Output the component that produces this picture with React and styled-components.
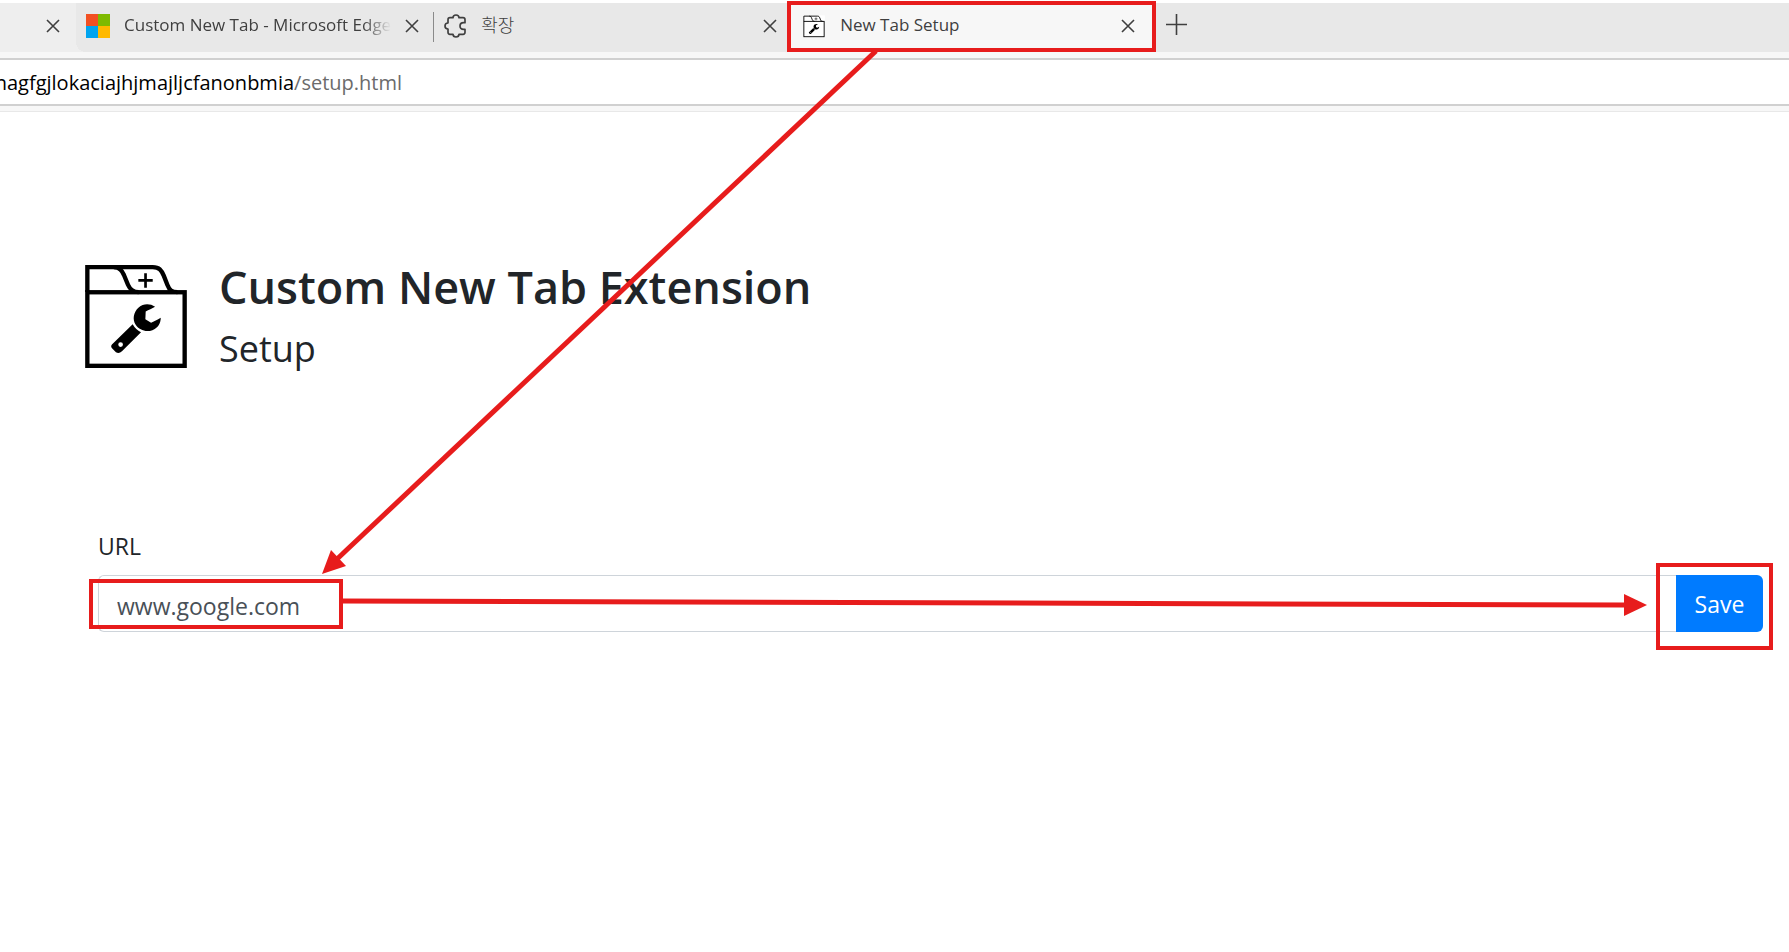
import React from "react";
import styled, { createGlobalStyle, css } from "styled-components";

const RED = "#e71c1c";

const GlobalStyle = createGlobalStyle`
  * {
    box-sizing: border-box;
  }
  body {
    margin: 0;
    background: #ffffff;
    color: #212529;
    font-family: "Open Sans", "Noto Sans", "Noto Sans CJK KR", sans-serif;
  }
`;

const Browser = styled.div`
  position: relative;
  min-height: 100vh;
  padding-top: 3px;
`;

const TabStrip = styled.div`
  display: flex;
  height: 49px;
  background: #e8e8e8;
`;

const highlight = css`
  &::before {
    content: "";
    position: absolute;
    inset: ${(props) => props.$inset};
    border: 4px solid ${RED};
    background: ${(props) => props.$fill || "transparent"};
    pointer-events: none;
  }
`;

const Tab = styled.div`
  position: relative;
  display: flex;
  align-items: center;
  flex: 0 0 358px;
  gap: 14px;
  padding: 0 15px 4px 10px;
  color: #3f3f3f;
  ${(props) => props.$active && highlight}

  > * {
    position: relative;
  }
`;

/* 왼쪽에서 잘린 탭 */
const CutTab = styled(Tab)`
  flex-basis: 76px;
  justify-content: flex-end;
  padding-right: 16px;
  background: #eeeeee;

  &::after {
    content: "";
    position: absolute;
    left: 100%;
    bottom: 0;
    width: 10px;
    height: 10px;
    background: radial-gradient(circle at 100% 0, transparent 10px, #eeeeee 10px);
  }
`;

const TabTitle = styled.span`
  flex: 1;
  padding-bottom: 2px;
  overflow: hidden;
  white-space: nowrap;
  font-size: 17px;
  line-height: 24px;
  ${(props) =>
    props.$fade &&
    "mask-image: linear-gradient(to right, #000 calc(100% - 28px), transparent);"}

  &:lang(ko) {
    font-size: 18px;
    font-weight: 300;
  }
`;

const IconButton = styled.button`
  display: flex;
  padding: 0;
  border: 0;
  background: none;
  color: #3f3f3f;
`;

const NewTabButton = styled(IconButton)`
  align-self: center;
  padding: 0 0 6px 16px;
`;

const Divider = styled.div`
  align-self: flex-start;
  flex: 0 0 1px;
  height: 30px;
  margin: 9px 0 0 -1px;
  background: #8a8a8a;
`;

const WindowsLogo = styled.div`
  display: grid;
  grid-template-columns: 12px 12px;
  grid-auto-rows: 12px;
`;

const Pane = styled.i`
  background: ${(props) => props.$color};
`;

const AddressRow = styled.div`
  padding: 6px 0 5px;
  border-bottom: 1px solid #e8e8e8;
  background: #f7f7f7;
`;

const AddressBar = styled.div`
  height: 48px;
  border-top: 2px solid #d0d0d0;
  border-bottom: 2px solid #d0d0d0;
  background: #ffffff;
`;

const Address = styled.div`
  display: flex;
  justify-content: flex-end;
  width: 402px;
  overflow: hidden;
  font-size: 20px;
  line-height: 46px;
  height: 44px;
  white-space: nowrap;
  color: #000000;

  span {
    color: #6b6b6b;
  }
`;

const Page = styled.main`
  padding: 148px 26px 0 85px;
`;

const Header = styled.header`
  display: flex;
  gap: 32px;
`;

const Logo = styled.svg`
  flex: none;
  margin-top: 5px;
`;

const Title = styled.h1`
  margin: 0;
  font-size: 45px;
  font-weight: 600;
  line-height: 54px;
`;

const Subtitle = styled.h2`
  margin: 13px 0 0;
  font-size: 36px;
  font-weight: 400;
  line-height: 44px;
`;

const Form = styled.form`
  margin: 157px 0 0 13px;
`;

const Label = styled.label`
  display: block;
  font-size: 23px;
  line-height: 36px;
`;

const InputGroup = styled.div`
  position: relative;
  display: flex;
  margin-top: 11px;
`;

const UrlInput = styled.input`
  flex: 1;
  height: 57px;
  padding: 4px 18px 0;
  border: 1px solid #ced4da;
  border-right: 0;
  border-radius: 6px 0 0 6px;
  outline: 0;
  color: #495057;
  font-family: inherit;
  font-size: 23px;
`;

const SaveSlot = styled.div`
  position: relative;
  display: flex;
  ${highlight}
`;

const SaveButton = styled.button`
  width: 87px;
  padding: 0;
  border: 0;
  border-radius: 0 6px 6px 0;
  background: #007bff;
  color: #ffffff;
  font-family: inherit;
  font-size: 23px;
`;

const InputMark = styled.div`
  position: absolute;
  top: 4px;
  left: -9px;
  width: 254px;
  height: 50px;
  border: 4px solid ${RED};
`;

const InputArrow = styled.div`
  position: absolute;
  top: 19px;
  left: 244px;
  right: 116px;
  height: 22px;
  display: flex;

  svg {
    overflow: visible;
  }
  svg:first-child {
    flex: 1;
    min-width: 0;
  }
`;

const TabArrow = styled.svg`
  position: absolute;
  top: 50px;
  left: 320px;
  pointer-events: none;
`;

function CloseIcon() {
  return (
    <svg width="14" height="14" viewBox="0 0 14 14" stroke="currentColor" strokeWidth="1.6">
      <path d="M1 1L13 13M13 1L1 13" />
    </svg>
  );
}

function PuzzleIcon() {
  return (
    <svg width="23" height="24" viewBox="0 0 69 72" fill="none" stroke="#3f3f3f" strokeWidth="5" strokeLinejoin="round">
      <path d="M18 11H27C27 5 31 3 36 3C41 3 45 5 45 11H57Q63 11 63 17V26H59C52 26 48 30 48 36C48 42 52 46 59 46H63V55Q63 61 57 61H45C45 67 41 69 36 69C31 69 27 67 27 61H18Q12 61 12 55V45C6 45 3 41 3 36C3 31 6 27 12 27V17Q12 11 18 11Z" />
    </svg>
  );
}

function ExtensionArt() {
  return (
    <>
      <g fill="none" stroke="#000" strokeWidth="13">
        <rect x="52.5" y="126.5" width="291" height="220" />
        <path d="M52.5 126V51.5H248C268 51.5 274 60 281 77L292 105C298 120 304 126 322 126" />
        <path d="M132 51.5C150 53 156 62 162 75L174 104C180 118 188 126 206 126" />
        <path d="M205 91H248M226.500 70V113" strokeWidth="8" />
      </g>
      <path d="M255 170C240 160 220 160 206 172C190 186 187 208 197 224C208 240 228 247 247 240C264 233 272 220 272 203C264 208 254 213 243 218L226 207L227 184C236 179 246 176 255 170Z" />
      <path
        fillRule="evenodd"
        d="M188 222Q197 238 213 246L156 303Q147 312 138 306L127 295Q121 288 126 283ZM152 276A7 7 0 1 0 152 290A7 7 0 1 0 152 276Z"
      />
    </>
  );
}

function App() {
  return (
    <>
      <GlobalStyle />
      <Browser>
        <TabStrip>
          <CutTab>
            <IconButton aria-label="닫기">
              <CloseIcon />
            </IconButton>
          </CutTab>
          <Tab>
            <WindowsLogo>
              <Pane $color="#f25022" />
              <Pane $color="#7fba00" />
              <Pane $color="#00a4ef" />
              <Pane $color="#ffb900" />
            </WindowsLogo>
            <TabTitle $fade>Custom New Tab - Microsoft Edge</TabTitle>
            <IconButton aria-label="닫기">
              <CloseIcon />
            </IconButton>
          </Tab>
          <Divider />
          <Tab>
            <PuzzleIcon />
            <TabTitle lang="ko">확장</TabTitle>
            <IconButton aria-label="닫기">
              <CloseIcon />
            </IconButton>
          </Tab>
          <Tab $active $inset="-2px -6px 0 -5px" $fill="#f7f7f7">
            <svg width="24" height="24" viewBox="26 21 344 344">
              <rect x="42" y="41" width="312" height="316" fill="#fff" />
              <ExtensionArt />
            </svg>
            <TabTitle>New Tab Setup</TabTitle>
            <IconButton aria-label="닫기">
              <CloseIcon />
            </IconButton>
          </Tab>
          <NewTabButton aria-label="새 탭">
            <svg width="21" height="21" viewBox="0 0 21 21" stroke="currentColor" strokeWidth="1.6">
              <path d="M10.500 0V21M0 10.500H21" />
            </svg>
          </NewTabButton>
        </TabStrip>
        <AddressRow>
          <AddressBar>
            <Address>
              nagfgjlokaciajhjmajljcfanonbmia<span>/setup.html</span>
            </Address>
          </AddressBar>
        </AddressRow>

        <Page>
          <Header>
            <Logo width="102" height="103" viewBox="46 45 304 308">
              <ExtensionArt />
            </Logo>
            <div>
              <Title>Custom New Tab Extension</Title>
              <Subtitle>Setup</Subtitle>
            </div>
          </Header>
          <Form onSubmit={(e) => e.preventDefault()}>
            <Label htmlFor="url">URL</Label>
            <InputGroup>
              <UrlInput id="url" type="text" defaultValue="www.google.com" />
              <SaveSlot $inset="-12px -10px -18px -20px">
                <SaveButton type="submit">Save</SaveButton>
              </SaveSlot>
              {/* 입력칸 표시와 저장 버튼으로 가는 화살표 */}
              <InputMark />
              <InputArrow>
                <svg height="22">
                  <line x1="0" y1="7" x2="100%" y2="11" stroke={RED} strokeWidth="5" />
                </svg>
                <svg width="23" height="22" viewBox="0 0 23 22">
                  <path d="M0 0L23 11L0 22Z" fill={RED} />
                </svg>
              </InputArrow>
            </InputGroup>
          </Form>
        </Page>

        {/* 탭에서 입력칸으로 가는 화살표 */}
        <TabArrow width="560" height="526" viewBox="320 50 560 526">
          <path d="M876 51L336 560" stroke={RED} strokeWidth="5" />
          <path d="M322 574L331 550L346 566Z" fill={RED} />
        </TabArrow>
      </Browser>
    </>
  );
}

export default App;
